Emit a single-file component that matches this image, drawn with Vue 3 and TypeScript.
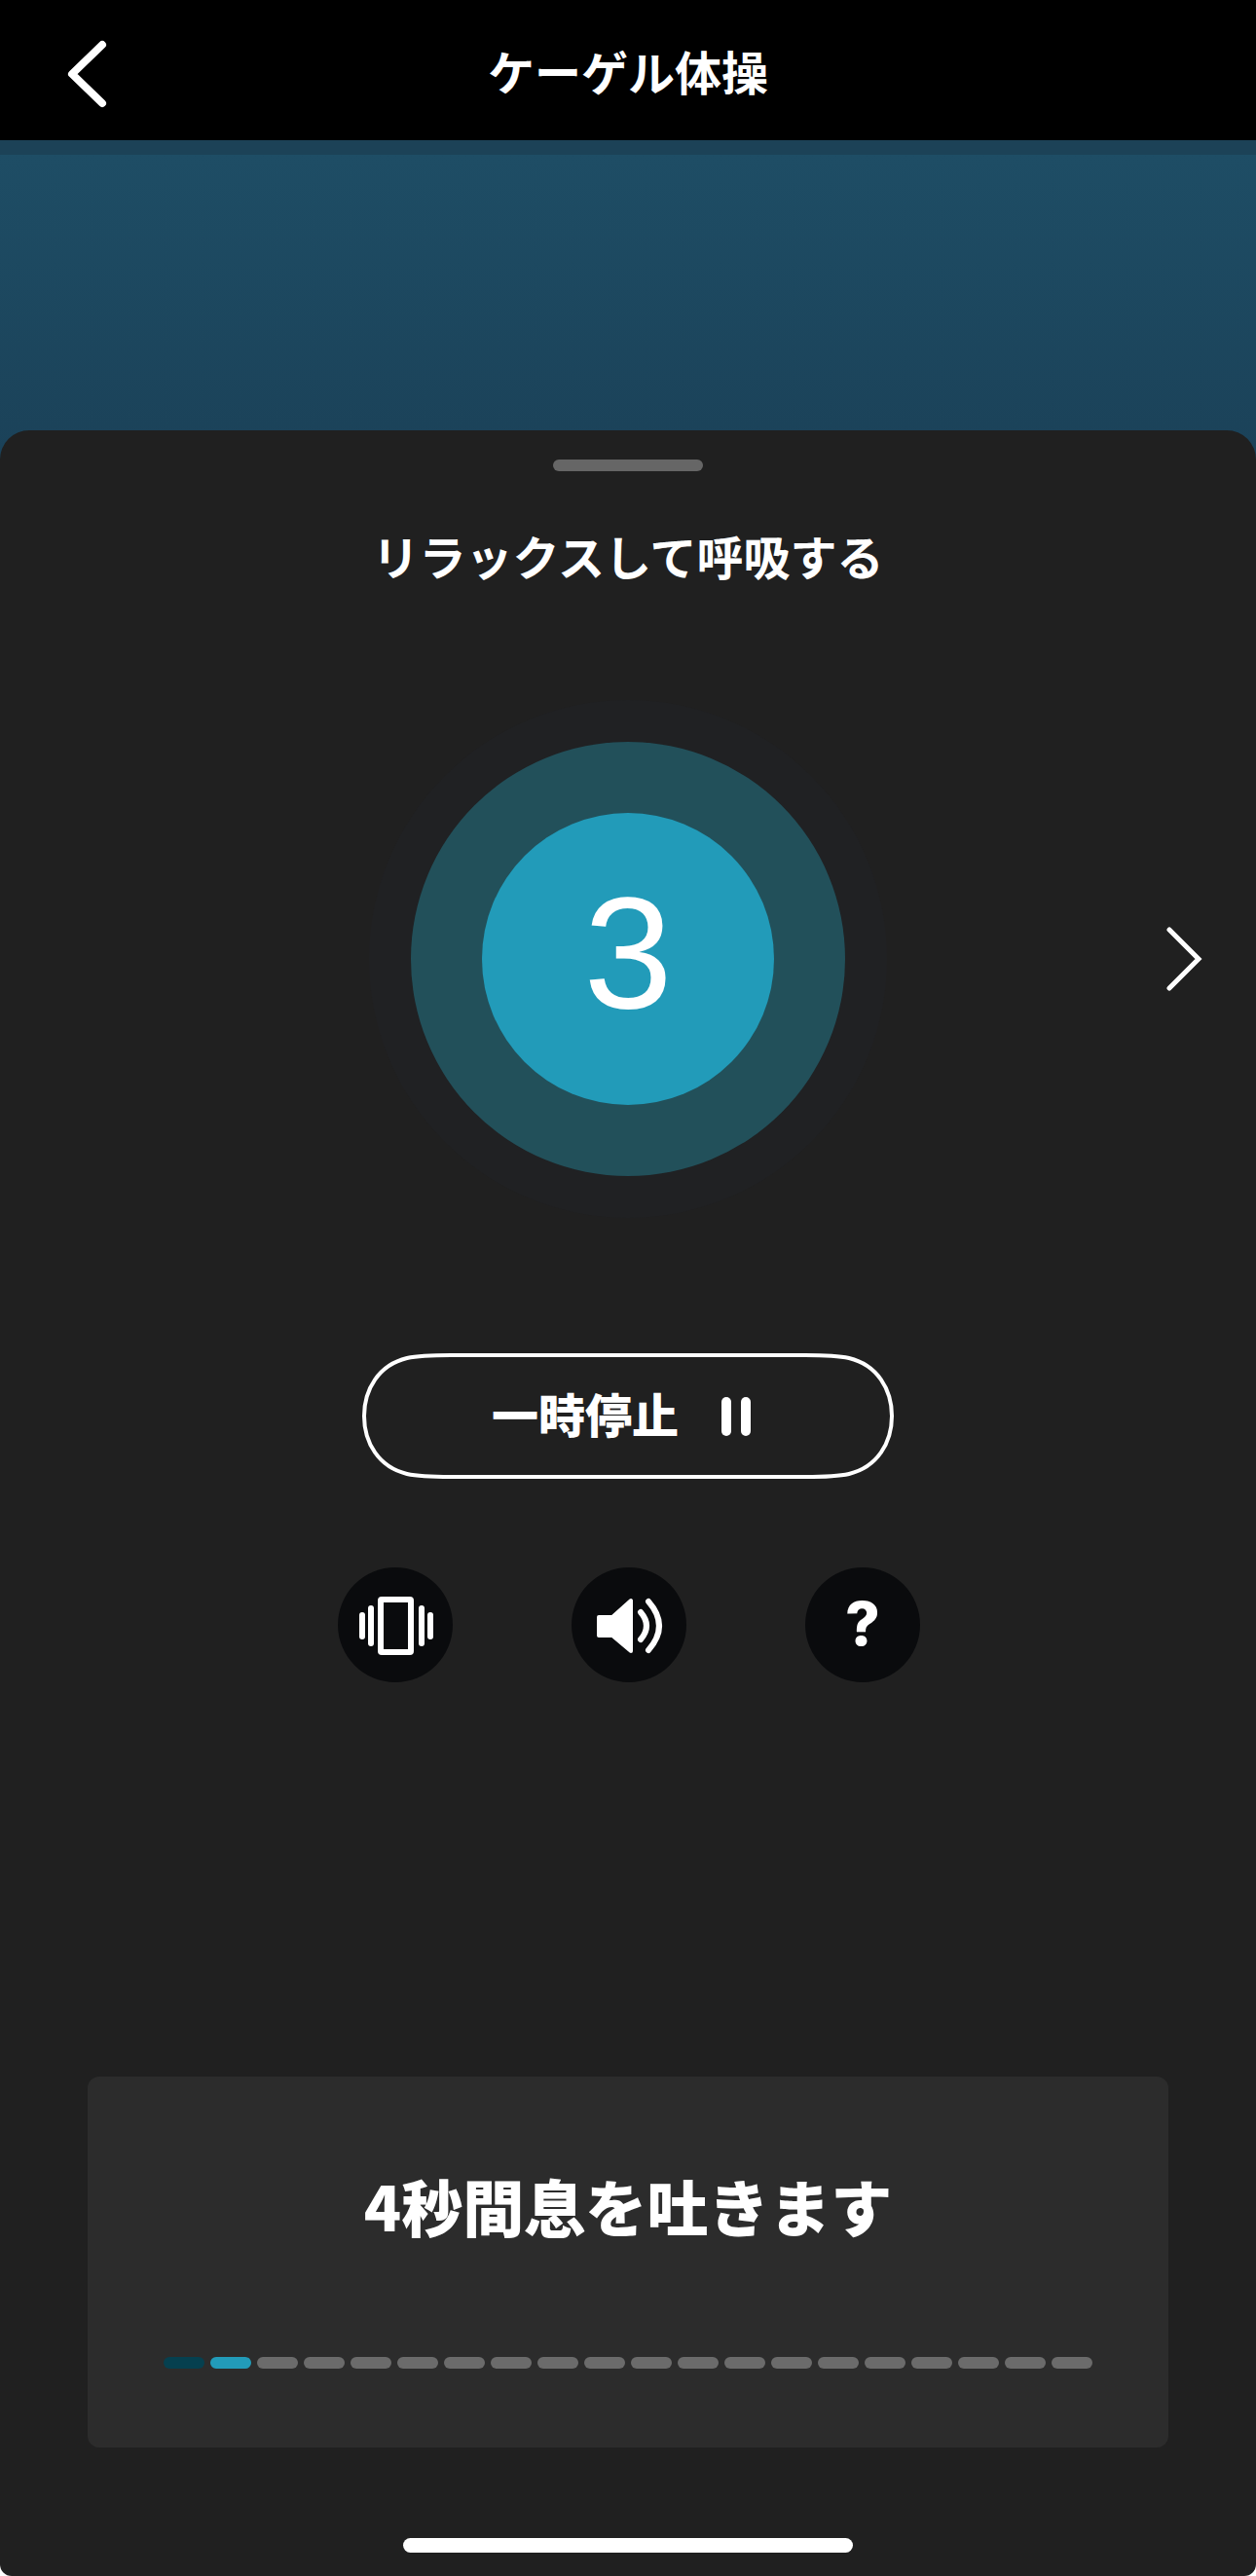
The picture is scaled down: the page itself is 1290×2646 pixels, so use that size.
<script setup lang="ts">
import { computed, ref } from 'vue'

type SegmentState = 'done' | 'current' | 'pending'

const count = ref(3)
const step = ref(1)
const totalSteps = 20
const paused = ref(false)

const segments = computed<SegmentState[]>(() =>
  Array.from({ length: totalSteps }, (_, i) =>
    i < step.value ? 'done' : i === step.value ? 'current' : 'pending'
  )
)
</script>

<template>
  <div class="screen">
    <header class="bar">
      <button class="plain back" type="button" aria-label="戻る">
        <svg width="48" height="76" viewBox="0 0 48 76" fill="none" stroke="#fff" stroke-width="8" stroke-linecap="round" stroke-linejoin="round">
          <path d="M41 8 L10 38 L41 68" />
        </svg>
      </button>
      <h1 class="title">ケーゲル体操</h1>
    </header>

    <div class="backdrop"></div>

    <main class="sheet">
      <div class="handle"></div>
      <h2 class="title">リラックスして呼吸する</h2>

      <section class="stage">
        <div class="halo">
          <div class="ring">
            <div class="disc">{{ count }}</div>
          </div>
        </div>
        <button class="plain next" type="button" aria-label="次へ">
          <svg width="44" height="76" viewBox="0 0 44 76" fill="none" stroke="#fff" stroke-width="5" stroke-linecap="round">
            <path d="M8 8 L38 38 L8 68" />
          </svg>
        </button>
      </section>

      <button class="plain pause" type="button" :aria-pressed="paused" @click="paused = !paused">
        <svg class="outline" viewBox="0 0 546 129" fill="none" stroke="#fff" stroke-width="4" aria-hidden="true">
          <path d="M91 2 H455 C483 2 491 3 500 5 C529 12 544 37 544 64.5 C544 92 529 117 500 124 C491 126 483 127 455 127 H91 C63 127 55 126 46 124 C17 117 2 92 2 64.5 C2 37 17 12 46 5 C55 3 63 2 91 2 Z" />
        </svg>
        <span class="label">一時停止</span>
        <svg width="30" height="40" viewBox="0 0 30 40" fill="#fff" aria-hidden="true">
          <rect width="10" height="40" rx="5" />
          <rect x="20" width="10" height="40" rx="5" />
        </svg>
      </button>

      <div class="tools">
        <button class="plain tool" type="button" aria-label="バイブレーション">
          <svg viewBox="0 0 118 118" fill="#fff">
            <rect x="44" y="33" width="31" height="54" rx="1" fill="none" stroke="#fff" stroke-width="6" />
            <rect x="31" y="39" width="6" height="42" rx="3" />
            <rect x="22" y="46" width="6" height="28" rx="3" />
            <rect x="83" y="39" width="6" height="42" rx="3" />
            <rect x="92" y="46" width="6" height="28" rx="3" />
          </svg>
        </button>
        <button class="plain tool" type="button" aria-label="サウンド">
          <svg viewBox="0 0 118 118" fill="none" stroke="#fff" stroke-linecap="round" stroke-linejoin="round">
            <path d="M28 51 H42 L61 34 V86 L42 70 H28 Z" fill="#fff" stroke-width="4" />
            <path d="M71 46 Q83 60 71 74 M79 35 Q101 60 79 85" stroke-width="6" />
          </svg>
        </button>
        <button class="plain tool help" type="button" aria-label="ヘルプ">?</button>
      </div>

      <section class="card">
        <p class="cue">4秒間息を吐きます</p>
        <ol class="steps" aria-label="進行状況">
          <li v-for="(state, i) in segments" :key="i" :class="state"></li>
        </ol>
      </section>

      <div class="home"></div>
    </main>
  </div>
</template>

<style>
body {
  margin: 0;
  background: #fff;
}
</style>

<style scoped>
.screen {
  display: flex;
  flex-direction: column;
  min-height: 100vh;
  color: #fff;
  font-family: "Noto Sans CJK JP", "Noto Sans", sans-serif;
}

.plain {
  padding: 0;
  border: 0;
  background: none;
  color: inherit;
  font: inherit;
  cursor: pointer;
}

.plain svg {
  display: block;
}

.title {
  margin: 0;
  font-size: 48px;
  font-weight: 700;
  line-height: 72px;
  text-align: center;
}

.bar {
  display: grid;
  grid-template-columns: 1fr auto 1fr;
  align-items: center;
  height: 144px;
  padding: 0 64px;
  box-sizing: border-box;
  background: #000;
}

.back {
  justify-self: start;
  padding-top: 8px;
}

.backdrop {
  height: 338px;
  border-top: 15px solid #1c4257;
  background: linear-gradient(#1e4d65, #1b4259 90%);
}

.sheet {
  display: flex;
  flex: 1;
  flex-direction: column;
  align-items: center;
  margin-top: -55px;
  padding: 30px 90px 24px;
  border-radius: 30px 30px 12px 12px;
  background: #202020;
}

.handle {
  width: 154px;
  height: 12px;
  margin-bottom: 50px;
  border-radius: 6px;
  background: #666;
}

.stage {
  display: grid;
  grid-template-columns: 1fr auto 1fr;
  align-items: center;
  align-self: stretch;
  margin: 113px -37px 139px;
}

.halo,
.ring,
.disc {
  display: flex;
  align-items: center;
  justify-content: center;
  border-radius: 50%;
}

.halo {
  grid-column: 2;
  width: 532px;
  height: 532px;
  background: #202123;
}

.ring {
  width: 446px;
  height: 446px;
  background: #22505a;
}

.disc {
  width: 300px;
  height: 300px;
  padding-bottom: 12px;
  box-sizing: border-box;
  background: #229bb9;
  font-family: "Liberation Sans", Arial, sans-serif;
  font-size: 164px;
  line-height: 1;
}

.next {
  justify-self: end;
}

.pause {
  position: relative;
  display: flex;
  align-items: center;
  justify-content: center;
  gap: 44px;
  width: 546px;
  height: 129px;
  padding-right: 14px;
  font-size: 48px;
  font-weight: 900;
}

.label {
  padding-bottom: 8px;
}

.outline {
  position: absolute;
  inset: 0;
}

.tools {
  display: flex;
  gap: 122px;
  margin: 91px 0;
  padding-left: 2px;
}

.tool {
  width: 118px;
  height: 118px;
  border-radius: 50%;
  background: #0a0b0d;
}

.help {
  padding-bottom: 4px;
  font-family: Inter, sans-serif;
  font-size: 62px;
  font-weight: 800;
}

.card {
  align-self: stretch;
  margin: auto 0 93px;
  padding: 84px 78px 81px;
  border-radius: 12px;
  background: #2c2c2c;
}

.cue {
  margin: 0 0 108px;
  font-size: 63px;
  font-weight: 900;
  line-height: 96px;
  text-align: center;
}

.steps {
  display: flex;
  gap: 6px;
  margin: 0;
  padding: 0;
  list-style: none;
}

.steps li {
  flex: 1;
  height: 12px;
  border-radius: 6px;
  background: #6b6b6b;
}

.steps .done {
  background: #06404f;
}

.steps .current {
  background: #229bb9;
}

.home {
  width: 462px;
  height: 15px;
  border-radius: 8px;
  background: #fff;
}
</style>
